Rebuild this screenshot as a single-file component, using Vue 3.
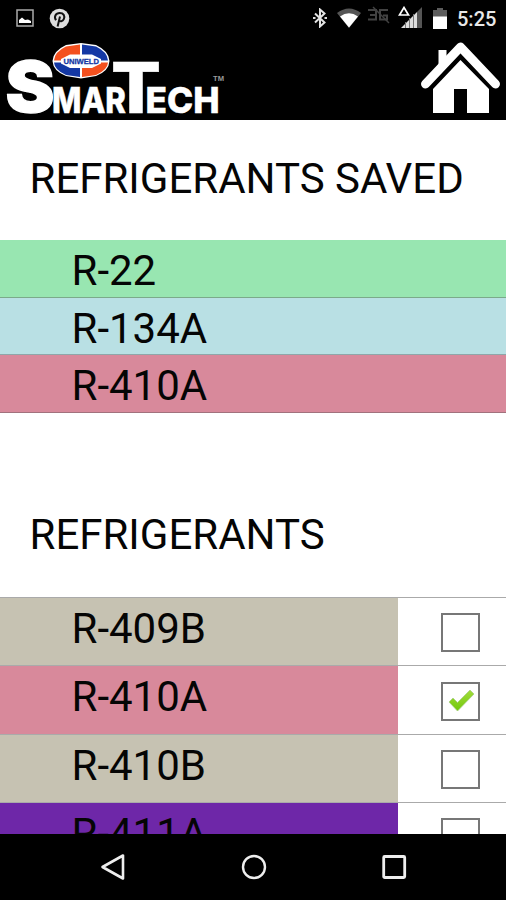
<script setup>
import { reactive } from 'vue';

const savedList = reactive([
  { name: 'R-22', color: 'green' },
  { name: 'R-134A', color: 'blue' },
  { name: 'R-410A', color: 'pink' },
]);

const refrigerantList = reactive([
  { name: 'R-409B', color: 'sand', checked: false },
  { name: 'R-410A', color: 'pink', checked: true },
  { name: 'R-410B', color: 'sand', checked: false },
  { name: 'R-411A', color: 'purple', checked: false },
]);

const handleToggle = (index) => {
  refrigerantList[index].checked = !refrigerantList[index].checked;
};
</script>

<template>
  <div class="phone">
    <header class="top">
      <div class="status">
        <div class="status-left">
          <!-- picture -->
          <svg width="18" height="18" viewBox="0 0 18 18">
            <rect x="1" y="1" width="16" height="16" fill="none" stroke="#aaa" stroke-width="1.5" />
            <path d="M3 14V11L6 8.5L9 11L12 10.5L15 12V14Z" fill="#fff" />
          </svg>
          <!-- pinterest -->
          <svg width="21" height="21" viewBox="0 0 21 21">
            <circle cx="10.5" cy="10.5" r="9.8" fill="#ddd" />
            <path
              d="M7 12.2C4.6 8.6 6.8 5 10.7 5C14.6 5 16.2 8 14.8 11.2C13.7 13.7 10.8 14 10 12M11 8.5L8.6 18.5"
              fill="none"
              stroke="#111"
              stroke-width="2"
            />
          </svg>
        </div>
        <div class="status-right">
          <svg class="bluetooth" width="14" height="20" viewBox="0 0 14 20">
            <path d="M2 5.5L11.5 14.5L7 18.5V1.5L11.5 5.5L2 14.5" fill="none" stroke="#e4e4e4" stroke-width="2" />
            <path d="M0 10H2.5M11.5 10H14" stroke="#ddd" stroke-width="2" />
          </svg>
          <svg class="wifi" width="24" height="20" viewBox="0 0 24 20">
            <path d="M0 5Q12-4 24 5L12 20Z" fill="#555" />
            <path d="M3 8.5Q12 2 21 8.5L12 19.5Z" fill="#fff" />
          </svg>
          <svg class="no-data" width="22" height="18" viewBox="0 0 22 18">
            <path
              d="M0 4H8V13.5H0M2 9H8M20 4H12V13.5H19V9.5H15"
              fill="none"
              stroke="#424242"
              stroke-width="2"
            />
            <path d="M5 1L21 17" stroke="#424242" stroke-width="1.5" />
          </svg>
          <svg class="signal" width="25" height="23" viewBox="0 0 25 23">
            <path d="M1.5 9L6 1.5L10.5 9Z" fill="none" stroke="#fff" stroke-width="1.7" />
            <path d="M3 22L19 6V22Z" fill="#ddd" />
            <path d="M19 6L24 1V22H19Z" fill="#555" />
            <path d="M7.5 16V22M11.5 12V22M15.5 8V22" stroke="#777" stroke-width="1" />
          </svg>
          <svg class="battery" width="14" height="21" viewBox="0 0 14 21">
            <path d="M4 0H10V2H14V9H0V2H4Z" fill="#5c5c5c" />
            <path d="M0 8.5H14V21H0Z" fill="#fff" />
          </svg>
          <span class="time">5:25</span>
        </div>
      </div>
      <div class="brand">
        <svg class="logo" width="225" height="77" viewBox="0 42 225 77">
          <g class="logo-text">
            <text class="heavy" x="5.5" y="112" font-size="70" textLength="49" lengthAdjust="spacingAndGlyphs">S</text>
            <text x="52" y="112.5" font-size="36" textLength="74" lengthAdjust="spacingAndGlyphs">MAR</text>
            <text x="111" y="112.5" font-size="70" textLength="50" lengthAdjust="spacingAndGlyphs">T</text>
            <text x="145.5" y="112.5" font-size="36" textLength="74" lengthAdjust="spacingAndGlyphs">ECH</text>
          </g>
          <path
            d="M66 45L81 43L96 45Q109 51 109.5 61Q109 71 96 76L81 78.5L66 76Q53 71 52.5 61Q53 51 66 45Z"
            fill="#fff"
          />
          <path d="M80 44.5L66 46.5Q54.5 52 54 60.5H80Z" fill="#f4501e" />
          <path d="M82 44.5L96 46.5Q107.5 52 108 60.5H82Z" fill="#1438a4" />
          <path d="M80 77L66 75Q54.5 70 54 62.5H80Z" fill="#1438a4" />
          <path d="M82 77L96 75Q107.5 70 108 62.5H82Z" fill="#f4501e" />
          <path d="M70 54.5H92L101 59V63.5L92 68H70L61 63.5V59Z" fill="#fff" />
          <text class="logo-badge" x="63.5" y="64" font-size="8" textLength="35.5" lengthAdjust="spacingAndGlyphs">
            UNIWELD
          </text>
          <text class="logo-tm" x="213" y="80.5" font-size="7.5" textLength="11" lengthAdjust="spacingAndGlyphs">
            TM
          </text>
        </svg>
        <svg class="home" width="80" height="73" viewBox="420 41 80 73">
          <path d="M438.5 66V50H446.5V58Z" fill="#fff" />
          <path
            d="M425.5 84L460.5 47L495.5 84"
            fill="none"
            stroke="#fff"
            stroke-width="9"
            stroke-linecap="round"
            stroke-linejoin="round"
          />
          <path d="M460.5 60L489 89V113H467V89H454V113H433V89Z" fill="#fff" />
        </svg>
      </div>
    </header>

    <main class="content">
      <h1 class="title">REFRIGERANTS SAVED</h1>
      <ul class="saved">
        <li v-for="item in savedList" :key="item.name" :class="item.color">{{ item.name }}</li>
      </ul>
      <h1 class="title second">REFRIGERANTS</h1>
      <ul class="list">
        <li v-for="(item, index) in refrigerantList" :key="item.name">
          <div class="name" :class="item.color">{{ item.name }}</div>
          <div class="check" @click="handleToggle(index)">
            <div class="box">
              <svg v-if="item.checked" width="28" height="24" viewBox="0 0 28 24">
                <defs>
                  <linearGradient id="tick" x1="0" y1="0" x2="0" y2="1">
                    <stop offset="0" stop-color="#a2dc3c" />
                    <stop offset="1" stop-color="#72c80c" />
                  </linearGradient>
                </defs>
                <path
                  d="M2 13L6 9L10.5 13.5L23 1L27 5L10.5 22Z"
                  fill="url(#tick)"
                  stroke="#a9cf85"
                  stroke-width="0.8"
                />
              </svg>
            </div>
          </div>
        </li>
      </ul>
    </main>

    <footer class="nav">
      <svg width="26" height="28" viewBox="0 0 26 28">
        <path d="M2.5 14L23 2.5V25.5Z" fill="none" stroke="#eee" stroke-width="2.6" stroke-linejoin="round" />
      </svg>
      <svg width="26" height="28" viewBox="0 0 26 28">
        <circle cx="13" cy="14" r="11" fill="none" stroke="#eee" stroke-width="2.4" />
      </svg>
      <svg width="26" height="28" viewBox="0 0 26 28">
        <rect x="2.7" y="3.5" width="21" height="21" rx="1" fill="none" stroke="#eee" stroke-width="2.8" />
      </svg>
    </footer>
  </div>
</template>

<style>
body {
  margin: 0;
  background-color: #fff;
}
</style>

<style scoped>
.phone {
  display: flex;
  flex-direction: column;
  height: 900px;
  overflow: hidden;
  color: #050505;
  font-family: Roboto, sans-serif;
}
.top {
  flex: none;
  height: 119.5px;
  background-color: #000;
}
.status {
  display: flex;
  justify-content: space-between;
  height: 42px;
  padding: 0 11px 0 16px;
  box-sizing: border-box;
}
.status-left {
  display: flex;
  align-items: flex-start;
  gap: 15px;
  padding-top: 8px;
}
.status-left svg:first-child {
  margin-top: 1px;
}
.status-right {
  display: flex;
  align-items: flex-start;
}
.bluetooth {
  margin: 8px 10px 0 0;
}
.wifi {
  margin: 8px 7px 0 0;
}
.no-data {
  margin: 6px 8px 0 0;
}
.signal {
  margin: 6px 10px 0 0;
}
.battery {
  margin: 8px 10px 0 0;
}
.time {
  width: 38px;
  font-size: 20px;
  font-weight: 500;
  line-height: 38px;
  color: #e8e8e8;
}
.brand {
  display: flex;
  justify-content: space-between;
  padding-right: 6px;
}
.logo {
  overflow: visible;
}
.logo-text {
  font-family: Inter, "Liberation Sans", sans-serif;
  font-weight: 800;
  fill: #fff;
  stroke: #fff;
  stroke-width: 0.5;
}
.logo-text .heavy {
  font-weight: 900;
  stroke-width: 1.3;
}
.logo-badge {
  font-family: "Liberation Sans", sans-serif;
  font-weight: bold;
  fill: #1438a4;
  stroke: #1438a4;
  stroke-width: 0.3;
}
.logo-tm {
  font-family: "Liberation Sans", sans-serif;
  font-weight: bold;
  fill: #999;
}
.home {
  margin-top: -1px;
}

.content {
  flex: 1;
  min-height: 0;
  overflow: hidden;
}
.title {
  height: 120.5px;
  margin: 0;
  padding-left: 29.5px;
  font-size: 42px;
  font-weight: 400;
  line-height: 118px;
  white-space: nowrap;
}
.second {
  height: 124px;
  padding-top: 60px;
  line-height: 124px;
}
.saved,
.list {
  margin: 0;
  padding: 0;
  list-style: none;
  font-size: 42px;
}
.saved li {
  height: 57.67px;
  padding-left: 71.5px;
  box-sizing: border-box;
  border-bottom: 1px solid rgba(80, 80, 80, 0.4);
  line-height: 61px;
}
.list {
  border-top: 1px solid #aaa;
}
.list li {
  display: flex;
  height: 68.3px;
  box-sizing: border-box;
  border-bottom: 1px solid #aaa;
}
.name {
  width: 398px;
  padding-left: 71.5px;
  box-sizing: border-box;
  line-height: 62px;
}
.check {
  flex: 1;
  padding: 15.5px 0 0 43px;
  cursor: pointer;
}
.box {
  display: flex;
  align-items: center;
  justify-content: center;
  width: 39px;
  height: 39px;
  box-sizing: border-box;
  border: 2px solid #777;
}
.green {
  background-color: #98e6b1;
}
.blue {
  background-color: #b9e0e4;
}
.pink {
  background-color: #d8899b;
}
.sand {
  background-color: #c6c2b2;
}
.purple {
  background-color: #6e27a8;
}

.nav {
  display: flex;
  flex: none;
  align-items: flex-start;
  justify-content: space-between;
  height: 66.5px;
  padding: 19px 99px 0 100px;
  box-sizing: border-box;
  background-color: #000;
}
</style>
